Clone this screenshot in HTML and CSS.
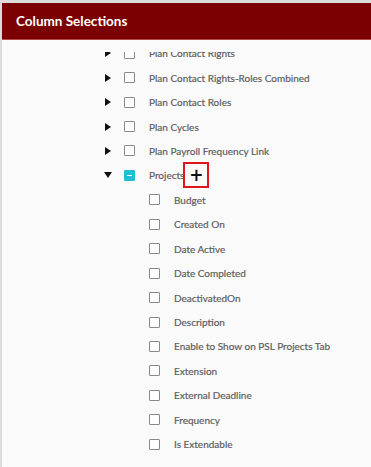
FILE: index.html
```html
<!DOCTYPE html>
<html lang="en">
<head>
	<meta charset="UTF-8">
	<title>Column Selections</title>
	<link rel="stylesheet" href="styles.css">
</head>
<body>
	<div class="panel">
		<div class="head">Column Selections</div>
		<div class="viewport">
			<ul class="tree">
				<li class="row"><span class="arrow"></span><span class="box"></span><span class="label">Plan Contact Rights</span></li>
				<li class="row"><span class="arrow"></span><span class="box"></span><span class="label">Plan Contact Rights-Roles Combined</span></li>
				<li class="row"><span class="arrow"></span><span class="box"></span><span class="label">Plan Contact Roles</span></li>
				<li class="row"><span class="arrow"></span><span class="box"></span><span class="label">Plan Cycles</span></li>
				<li class="row"><span class="arrow"></span><span class="box"></span><span class="label">Plan Payroll Frequency Link</span></li>
				<li class="row"><span class="arrow open"></span><span class="box part"></span><span class="label">Projects</span><span class="mark">+</span></li>
				<li class="row child"><span class="box"></span><span class="label">Budget</span></li>
				<li class="row child"><span class="box"></span><span class="label">Created On</span></li>
				<li class="row child"><span class="box"></span><span class="label">Date Active</span></li>
				<li class="row child"><span class="box"></span><span class="label">Date Completed</span></li>
				<li class="row child"><span class="box"></span><span class="label">DeactivatedOn</span></li>
				<li class="row child"><span class="box"></span><span class="label">Description</span></li>
				<li class="row child"><span class="box"></span><span class="label">Enable to Show on PSL Projects Tab</span></li>
				<li class="row child"><span class="box"></span><span class="label">Extension</span></li>
				<li class="row child"><span class="box"></span><span class="label">External Deadline</span></li>
				<li class="row child"><span class="box"></span><span class="label">Frequency</span></li>
				<li class="row child"><span class="box"></span><span class="label">Is Extendable</span></li>
			</ul>
		</div>
	</div>
</body>
</html>
```
FILE: styles.css
```css
html, body{
	margin: 0;
	height: 100%;
}
body{
	background-color: #dcdcdc;
	padding-top: 3px;
	padding-left: 2px;
	box-sizing: border-box;
	font-family: "Lato", "Liberation Sans", sans-serif;
}
.panel{
	background-color: #fafafa;
	height: 100%;
	display: flex;
	flex-direction: column;
}
.head{
	background-color: #7b0002;
	color: #fff;
	font-weight: bold;
	font-size: 13.5px;
	height: 36px;
	line-height: 36px;
	padding-left: 14px;
	border-bottom: 1px solid #b54a4a;
}
.viewport{
	margin-top: 12px;
	flex: 1;
	overflow: hidden;
}
.tree{
	list-style: none;
	margin: -11px 0 0 0;
	padding: 0 0 0 103px;
}
.row{
	height: 24.45px;
	display: flex;
	align-items: center;
	font-size: 10px;
	color: #5e5e5e;
	-webkit-text-stroke: 0.2px #5e5e5e;
}
.child{
	padding-left: 44px;
}
.label{
	margin-left: 2px;
}
.arrow{
	width: 0;
	height: 0;
	border-top: 4px solid transparent;
	border-bottom: 4px solid transparent;
	border-left: 6px solid #111;
	margin-right: 13px;
}
.arrow.open{
	border-left: 4px solid transparent;
	border-right: 4px solid transparent;
	border-top: 6px solid #111;
	border-bottom: 0;
	margin-left: -1px;
	margin-right: 12px;
}
.box{
	width: 9px;
	height: 9px;
	border: 1.5px solid #8a8a8a;
	border-radius: 1px;
	background: #fff;
	margin-right: 12px;
	position: relative;
}
.box.part{
	background: #1fbfd6;
	border-color: #1fbfd6;
}
.box.part::after{
	content: "";
	position: absolute;
	left: 2px;
	right: 2px;
	top: 4px;
	height: 1.5px;
	background: #fff;
}
.mark{
	margin-left: -1px;
	width: 22px;
	height: 22px;
	border: 2px solid #e0161b;
	display: flex;
	align-items: center;
	justify-content: center;
	color: #111;
	-webkit-text-stroke: 0;
	font-family: "DejaVu Sans", sans-serif;
	font-weight: bold;
	font-size: 17px;
}
```
